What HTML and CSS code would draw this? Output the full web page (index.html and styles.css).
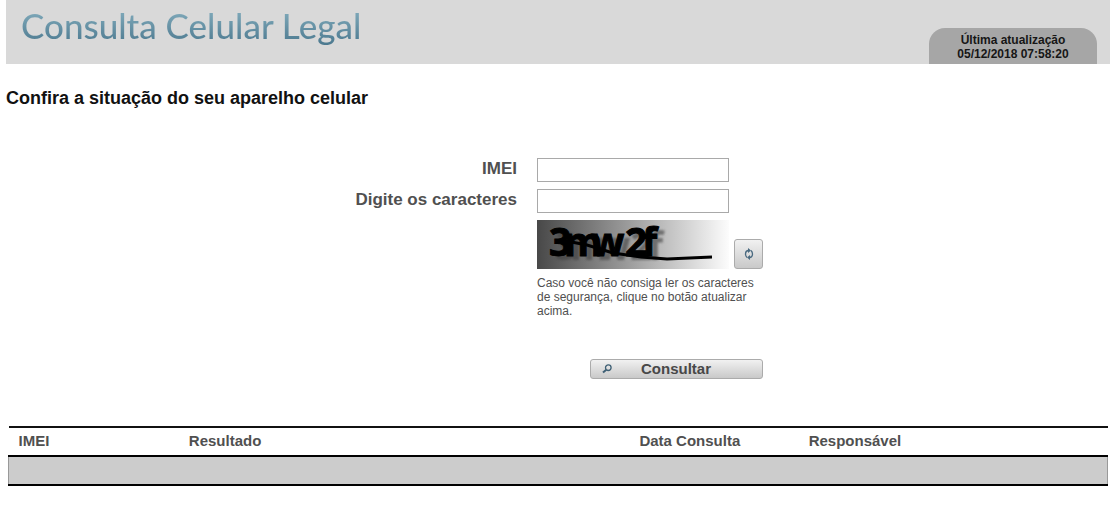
FILE: index.html
```html
<!DOCTYPE html>
<html lang="pt-BR">
<head>
<meta charset="utf-8">
<title>Consulta Celular Legal</title>
<link rel="stylesheet" href="styles.css">
</head>
<body>
<header class="banner">
  <h1 class="banner-title">Consulta Celular Legal</h1>
  <p class="updated">Última atualização<br>05/12/2018 07:58:20</p>
</header>
<main class="content">
  <h2 class="subtitle">Confira a situação do seu aparelho celular</h2>
  <form class="query">
    <label class="query-label" for="imei">IMEI</label>
    <input class="query-input" id="imei" type="text">
    <label class="query-label" for="chars">Digite os caracteres</label>
    <input class="query-input" id="chars" type="text">
    <div class="captcha">
      <svg class="captcha-image" viewBox="0 0 192 49" role="img" aria-label="Imagem de segurança">
        <defs>
          <linearGradient id="fade"><stop offset="0" stop-color="#484848"/><stop offset="0.5" stop-color="#a0a0a0"/><stop offset="1" stop-color="#fcfcfc"/></linearGradient>
          <filter id="soft"><feGaussianBlur stdDeviation="1"/></filter>
        </defs>
        <rect width="192" height="49" fill="url(#fade)"/>
        <text class="captcha-shadow" x="18 33 60 93 111" y="40" filter="url(#soft)">3mw2f</text>
        <text class="captcha-text" x="12 27 54 88 105" y="36">3mw2f</text>
        <path d="M24 20 L50 25 L76 33 L104 37 L130 39 L175 37" fill="none" stroke="#000" stroke-width="3"/>
      </svg>
      <button class="button refresh" type="button" aria-label="Atualizar">
        <svg width="10" height="12" viewBox="0 0 10 12" fill="none" stroke="#4a6a80" stroke-width="1.300"><path d="M5 2.500H4Q1.500 3 1.500 6Q1.500 8 3 9.500M5 9.500H6Q8.500 9 8.500 6Q8.500 4 7 2.500"/><path d="M4 0L7 2.500L4 5ZM6 7L3 9.500L6 12Z" fill="#4a6a80" stroke="none"/></svg>
      </button>
    </div>
    <p class="hint">Caso você não consiga ler os caracteres de segurança, clique no botão atualizar acima.</p>
    <button class="button submit" type="submit">
      <svg width="10" height="10" viewBox="0 0 10 10" fill="none" stroke="#3f6075"><circle cx="6.300" cy="3.700" r="2.800" stroke-width="1.300"/><path d="M4.300 5.700L1 8.500" stroke-width="2"/></svg>
      <span class="submit-text">Consultar</span>
    </button>
  </form>
  <table class="results">
    <thead><tr><th class="col-imei">IMEI</th><th class="col-result">Resultado</th><th class="col-date">Data Consulta</th><th>Responsável</th></tr></thead>
    <tbody><tr><td colspan="4"></td></tr></tbody>
  </table>
</main>
</body>
</html>
```
FILE: styles.css
```css
* { box-sizing: border-box; }
body {
  margin: 0;
  background: #fff;
  color: #505050;
  font-family: "Liberation Sans", Arial, sans-serif;
}
.banner {
  display: flex;
  justify-content: space-between;
  height: 64px;
  margin-left: 6px;
  padding: 0 13px 0 15px;
  background: #d9d9d9;
}
.banner-title {
  margin: 5px 0 0;
  font: 500 35px/40px Lato, sans-serif;
  color: transparent;
  background: linear-gradient(#7ba5b6 15%, #3c6a82 85%);
  background-clip: text;
}
.updated {
  align-self: flex-end;
  width: 168px;
  height: 36px;
  margin: 0;
  padding-top: 5px;
  border-radius: 16px 16px 0 0;
  background: #a6a6a6;
  color: #161616;
  font-size: 12px;
  font-weight: 700;
  line-height: 14px;
  text-align: center;
}
.content { padding: 24px 2px 0 8px; }
.subtitle {
  margin: 0 0 0 -2px;
  color: #111;
  font-size: 18px;
  line-height: 20px;
}
.query {
  display: grid;
  grid-template-columns: 47% 226px;
  column-gap: 12px;
  row-gap: 7px;
  margin-top: 50px;
}
.query-label {
  font-size: 17px;
  font-weight: 700;
  line-height: 22px;
  text-align: right;
  padding-right: 8px;
}
.query-input {
  width: 192px;
  height: 24px;
  padding: 0 4px;
  border: 1px solid #a9a9a9;
  background: #fff;
  font: inherit;
  font-size: 14px;
}
.captcha, .hint, .submit { grid-column: 2; }
.captcha {
  display: flex;
  justify-content: space-between;
  align-items: flex-end;
}
.captcha-image { width: 192px; height: 49px; }
.captcha-text, .captcha-shadow {
  font: 700 39px "Open Sans", sans-serif;
}
.captcha-text { stroke: #000; stroke-width: 1px; }
.captcha-shadow { fill: #404040; opacity: .6; }
.button {
  display: flex;
  align-items: center;
  padding: 0;
  border: 1px solid #ababab;
  border-radius: 3px;
  background: linear-gradient(#f1f1f1, #c9c9c9);
}
.refresh { justify-content: center; width: 29px; height: 30px; }
.hint {
  margin: 0;
  font-size: 12px;
  line-height: 14px;
}
.submit {
  justify-self: end;
  width: 173px;
  height: 20px;
  margin-top: 34px;
  padding-left: 11px;
  color: #484848;
  font: 700 15px/18px "Liberation Sans", Arial, sans-serif;
}
.submit-text { margin-left: 29px; }
.results {
  width: 100%;
  margin-top: 47px;
  border-collapse: collapse;
  table-layout: fixed;
}
.results th {
  height: 29px;
  padding: 0 0 2px 10px;
  border-top: 2px solid #111;
  font-size: 15px;
  line-height: 18px;
  text-align: left;
}
.col-imei { width: 15.500%; }
.col-result { width: 41%; }
.col-date { width: 15.400%; }
.results td {
  height: 29px;
  padding: 0;
  border: 1px solid #999;
  border-top: 2px solid #000;
  border-bottom: 2px solid #000;
  background: #ccc;
}
```
